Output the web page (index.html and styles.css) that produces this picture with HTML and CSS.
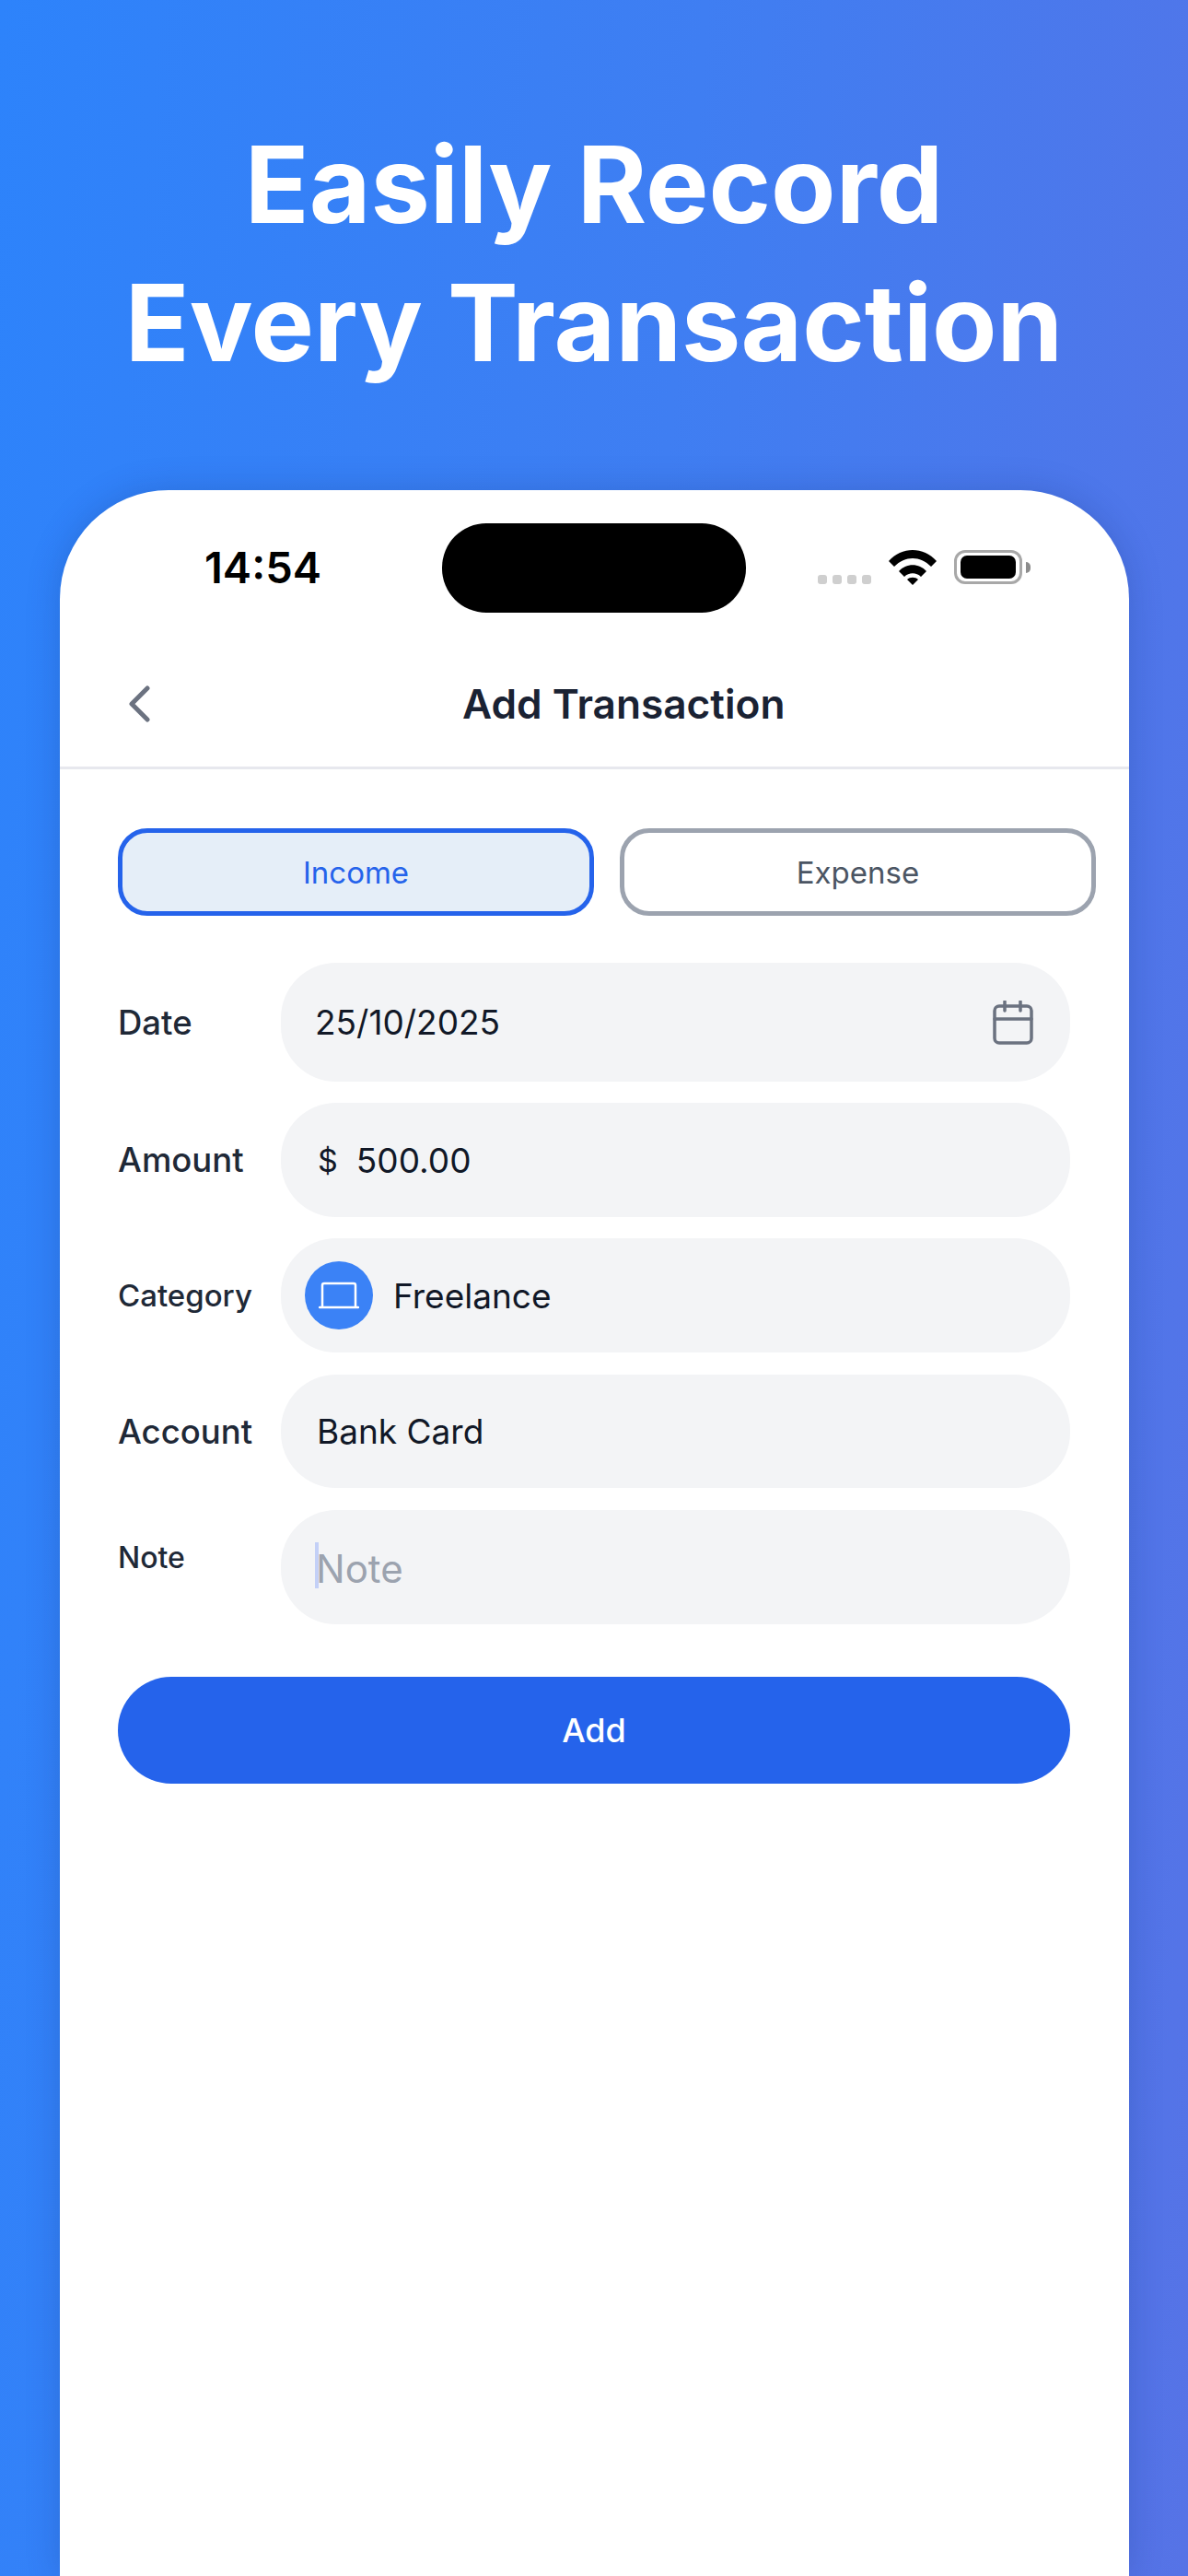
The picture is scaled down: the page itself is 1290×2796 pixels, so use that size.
FILE: index.html
```html
<!DOCTYPE html>
<html lang="en">
<head>
    <meta charset="UTF-8">
    <meta name="viewport" content="width=device-width, initial-scale=1.0">
    <title>Easily Record Every Transaction</title>
    <link rel="stylesheet" href="styles.css">
</head>
<body>
    <h1 class="headline">Easily Record<br>Every Transaction</h1>

    <div class="phone">
        <div class="status-bar">
            <span class="clock">14:54</span>
            <div class="island"></div>
            <div class="status-icons">
                <div class="signal"><i></i><i></i><i></i><i></i></div>
                <svg class="wifi" width="52" height="38" viewBox="0 0 52 38">
                    <path d="M0 12C14-4 38-4 52 12L46 18C34 6 18 6 6 18Z"/>
                    <path d="M11 23C19 14 33 14 41 23L35 29C30 24 22 24 17 29Z"/>
                    <path d="M20 32C23 29 29 29 32 32L26 38Z"/>
                </svg>
                <div class="battery"><div class="battery-level"></div></div>
                <div class="battery-cap"></div>
            </div>
        </div>

        <div class="nav-bar">
            <svg class="back" width="24" height="40" viewBox="0 0 24 40">
                <path d="M21 3L4 20L21 37"/>
            </svg>
            <span class="nav-title">Add Transaction</span>
        </div>

        <form class="form">
            <div class="type-switch">
                <button type="button" class="type-btn active">Income</button>
                <button type="button" class="type-btn">Expense</button>
            </div>

            <div class="row row-date">
                <label class="label">Date</label>
                <div class="field">
                    <span class="value">25/10/2025</span>
                    <svg class="calendar" width="44" height="48" viewBox="0 0 44 48">
                        <rect x="2" y="6" width="40" height="40" rx="5"/>
                        <path d="M2 20H42M13 1V11M30 1V11"/>
                    </svg>
                </div>
            </div>

            <div class="row row-amount">
                <label class="label">Amount</label>
                <div class="field">
                    <span class="value currency">$</span>
                    <span class="value">500.00</span>
                </div>
            </div>

            <div class="row">
                <label class="label label-small">Category</label>
                <div class="field field-category">
                    <div class="category-icon">
                        <svg class="laptop" width="44" height="30" viewBox="0 0 44 30">
                            <path d="M4 27V4Q4 2 6 2H38Q40 2 40 4V27"/>
                            <path d="M1 28H43"/>
                        </svg>
                    </div>
                    <span class="value">Freelance</span>
                </div>
            </div>

            <div class="row row-account">
                <label class="label">Account</label>
                <div class="field field-account">
                    <span class="value">Bank Card</span>
                </div>
            </div>

            <div class="row row-note">
                <label class="label label-note">Note</label>
                <div class="field">
                    <span class="caret"></span>
                    <span class="placeholder">Note</span>
                </div>
            </div>

            <button type="button" class="add-btn">Add</button>
        </form>
    </div>
</body>
</html>
```

FILE: styles.css
```css
html, body {
    height: 2796px;
}
body {
    margin: 0;
    overflow: hidden;
    font-family: Inter, "Noto Sans", sans-serif;
    background: linear-gradient(95deg, #2d83fb 0%, #3f7ef2 50%, #5673e6 100%);
    color: #111827;
}
.headline {
    margin: 0;
    padding-top: 126px;
    height: 532px;
    box-sizing: border-box;
    text-align: center;
    color: #fff;
    font-size: 115px;
    font-weight: 700;
    line-height: 150px;
}
.phone {
    margin: 0 64px 0 65px;
    height: 2264px;
    background-color: #fff;
    border-radius: 118px 118px 0 0;
    box-shadow: 0 0 36px rgba(20, 40, 110, 0.22);
}

/* status bar */
.status-bar {
    display: grid;
    grid-template-columns: 415px 330px 1fr;
    height: 168px;
}
.clock {
    padding: 54px 0 0 157px;
    font-size: 47px;
    font-weight: 600;
    line-height: 60px;
    color: #000;
}
.island {
    margin-top: 36px;
    height: 97px;
    background-color: #000;
    border-radius: 48px;
}
.status-icons {
    display: flex;
    align-items: flex-start;
    padding-top: 65px;
}
.signal {
    display: flex;
    gap: 6px;
    margin: 27px 0 0 78px;
}
.signal i {
    width: 10px;
    height: 10px;
    background-color: #cfcfcf;
    border-radius: 3px;
}
.wifi {
    margin-left: 19px;
    fill: #000;
}
.battery {
    margin-left: 19px;
    width: 74px;
    height: 37px;
    padding: 3px 4px;
    box-sizing: border-box;
    border: 3px solid #a8a8a8;
    border-radius: 12px;
}
.battery-level {
    height: 100%;
    background-color: #000;
    border-radius: 7px;
}
.battery-cap {
    margin: 13px 0 0 4px;
    width: 5px;
    height: 12px;
    background-color: #8c8c8c;
    border-radius: 0 5px 5px 0;
}

/* nav */
.nav-bar {
    display: flex;
    align-items: center;
    height: 135px;
    padding: 0 0 5px 74px;
    box-sizing: border-box;
    border-bottom: 3px solid #e7e8ee;
}
.back {
    fill: none;
    stroke: #6b7280;
    stroke-width: 5;
    stroke-linecap: round;
    stroke-linejoin: round;
}
.nav-title {
    margin-left: 339px;
    font-size: 44.2px;
    font-weight: 600;
    color: #1a2233;
}

/* form */
.form {
    padding: 64px 64px 0 63px;
}
.type-switch {
    display: flex;
    gap: 28px;
    margin-bottom: 51px;
}
.type-btn {
    flex: none;
    width: 517px;
    height: 95px;
    padding: 0;
    font-family: inherit;
    font-size: 33px;
    color: #4b5563;
    background-color: #fff;
    border: 5px solid #9ca3af;
    border-radius: 32px;
}
.type-btn.active {
    color: #2563eb;
    background-color: #e5eef8;
    border-color: #2563eb;
}
.row {
    display: grid;
    grid-template-columns: 177px 1fr;
    align-items: center;
    height: 124px;
    margin-bottom: 24px;
}
.row-date {
    height: 129px;
    margin-bottom: 23px;
}
.row-amount {
    margin-bottom: 23px;
}
.row-account {
    height: 123px;
}
.row-note {
    margin-bottom: 57px;
}
.label {
    font-size: 36.5px;
    font-weight: 500;
    color: #1f2937;
}
.label-small {
    font-size: 33px;
}
.label-note {
    align-self: start;
    margin-top: 32px;
    font-size: 32px;
}
.field {
    display: flex;
    align-items: center;
    height: 100%;
    padding: 0 37px;
    background-color: #f3f4f6;
    border-radius: 60px;
}
.field-account {
    padding-left: 39px;
}
.value {
    font-size: 37px;
    color: #111827;
}
.currency {
    margin: 0 20px 0 3px;
    font-size: 34px;
}
.calendar {
    margin-left: auto;
    margin-right: 3px;
    fill: none;
    stroke: #6b7280;
    stroke-width: 3.5;
    stroke-linecap: round;
}
.field-category {
    padding-left: 26px;
    gap: 22px;
}
.category-icon {
    display: flex;
    align-items: center;
    justify-content: center;
    width: 74px;
    height: 74px;
    background-color: #3b82f6;
    border-radius: 50%;
}
.laptop {
    fill: none;
    stroke: #fff;
    stroke-width: 2.5;
    stroke-linecap: round;
}
.caret {
    flex: none;
    width: 4px;
    height: 50px;
    margin-top: -4px;
    background-color: #c3d0f7;
}
.placeholder {
    margin: 2px 0 0 -3px;
    font-size: 42px;
    color: #9ca3af;
}
.add-btn {
    display: block;
    width: 100%;
    height: 116px;
    padding: 0;
    font-family: inherit;
    font-size: 36px;
    font-weight: 500;
    color: #fff;
    background-color: #2563eb;
    border: none;
    border-radius: 58px;
}
```
